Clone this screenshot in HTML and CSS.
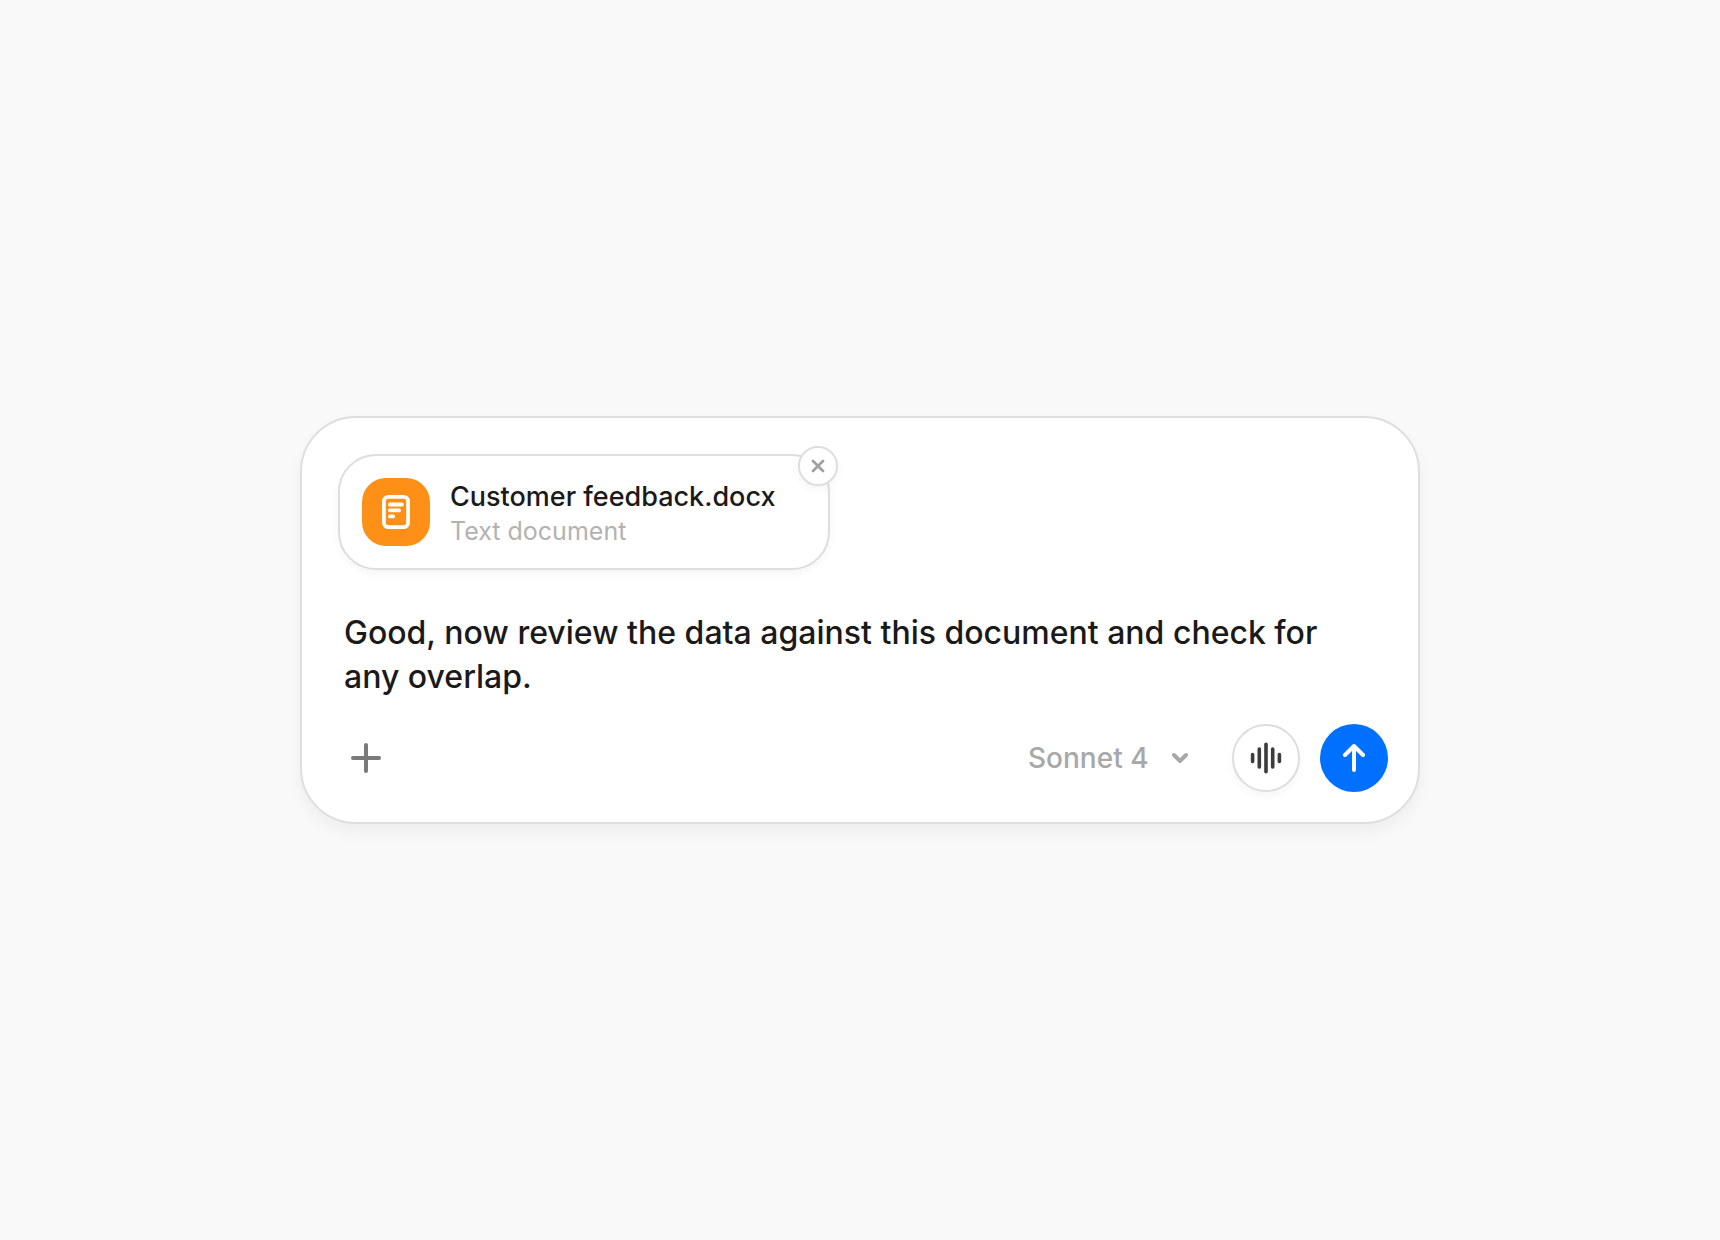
FILE: index.html
```html
<!DOCTYPE html>
<html lang="en">
<head>
  <meta charset="utf-8">
  <meta name="viewport" content="width=device-width, initial-scale=1">
  <title>Prompt composer</title>
  <link rel="stylesheet" href="styles.css">
</head>
<body>
  <main class="page">
    <form class="composer">
      <div class="attachment">
        <span class="attachment-icon">
          <svg width="28" height="34" viewBox="0 0 28 34" fill="none" stroke="#fff" aria-hidden="true">
            <rect x="1.9" y="1.9" width="24.2" height="30.2" rx="4.5" stroke-width="3.8"/>
            <path d="M7.9 9.5h12M7.9 15.4h9.2M7.9 21.4h3.2" stroke-width="3.8" stroke-linecap="round"/>
          </svg>
        </span>
        <div class="attachment-text">
          <span class="attachment-name">Customer feedback.docx</span>
          <span class="attachment-type">Text document</span>
        </div>
        <button class="remove" type="button" aria-label="Remove attachment">
          <svg width="14" height="14" viewBox="0 0 14 14" fill="none" stroke="#a0a0a0" stroke-width="2.8" stroke-linecap="round" aria-hidden="true">
            <path d="M2 2l10 10M12 2L2 12"/>
          </svg>
        </button>
      </div>

      <textarea class="prompt" rows="2" aria-label="Message" spellcheck="false">Good, now review the data against this document and check for any overlap.</textarea>

      <div class="toolbar">
        <button class="add" type="button" aria-label="Add">
          <svg width="30" height="30" viewBox="0 0 30 30" fill="none" stroke="#7a7a7a" stroke-width="4" stroke-linecap="round" aria-hidden="true">
            <path d="M15 2v26M2 15h26"/>
          </svg>
        </button>
        <div class="model">
          <select class="model-select" aria-label="Model">
            <option>Sonnet 4</option>
          </select>
          <svg class="model-chevron" width="16" height="12" viewBox="0 0 16 12" fill="none" stroke="#a8a8a8" stroke-width="4" stroke-linecap="round" stroke-linejoin="round" aria-hidden="true">
            <path d="M2 3l6 6 6-6"/>
          </svg>
        </div>
        <button class="round voice" type="button" aria-label="Voice input">
          <svg width="32" height="32" viewBox="0 0 32 32" fill="none" stroke="#3c3c3c" stroke-width="3.6" stroke-linecap="round" aria-hidden="true">
            <path d="M2.6 12.6v6.8M9.3 7v18M16 2.3v27.4M22.7 7v18M29.4 12.6v6.8"/>
          </svg>
        </button>
        <button class="round send" type="submit" aria-label="Send">
          <svg width="24" height="30" viewBox="0 0 24 30" fill="none" stroke="#fff" stroke-width="4" stroke-linecap="round" stroke-linejoin="round" aria-hidden="true">
            <path d="M12 27V3M3 12l9-9 9 9"/>
          </svg>
        </button>
      </div>
    </form>
  </main>
</body>
</html>
```
FILE: styles.css
```css
*,
*::before,
*::after {
  box-sizing: border-box;
}

body {
  margin: 0;
  background: #f9f9f9;
  color: #1a1a1a;
  font-family: Inter, "Liberation Sans", sans-serif;
  font-weight: 500;
}

button,
select,
textarea {
  margin: 0;
  padding: 0;
  border: 0;
  background: none;
  color: inherit;
  font: inherit;
}

button,
select {
  cursor: pointer;
}

svg {
  display: block;
}

.page {
  display: flex;
  align-items: center;
  justify-content: center;
  min-height: 100vh;
  padding: 24px;
}

.composer {
  display: flex;
  flex-direction: column;
  align-items: flex-start;
  width: 100%;
  max-width: 1120px;
  padding: 36px 30px 30px 36px;
  border: 2px solid #dedede;
  border-radius: 56px;
  background: #fff;
  box-shadow: 0 8px 16px rgba(0, 0, 0, 0.05);
}

.attachment {
  position: relative;
  display: flex;
  align-items: center;
  gap: 20px;
  padding: 22px 53px 22px 22px;
  border: 2px solid #dedede;
  border-radius: 38px;
  background: #fff;
  box-shadow: 0 4px 8px rgba(0, 0, 0, 0.04);
}

.attachment-icon {
  display: grid;
  place-items: center;
  width: 68px;
  height: 68px;
  border-radius: 24px;
  background: #ff9017;
}

.attachment-text {
  display: flex;
  flex-direction: column;
}

.attachment-name {
  font-size: 27px;
  line-height: 38px;
}

.attachment-type {
  color: #b2b2b2;
  font-size: 25px;
  font-weight: 400;
  line-height: 30px;
}

.remove {
  position: absolute;
  top: -10px;
  right: -10px;
  display: grid;
  place-items: center;
  width: 40px;
  height: 40px;
  border: 2px solid #dedede;
  border-radius: 50%;
  background: #fff;
  box-shadow: 0 4px 8px rgba(0, 0, 0, 0.04);
}

.prompt {
  width: 100%;
  margin-top: 41px;
  padding: 0 24px 0 6px;
  outline: 0;
  resize: none;
  overflow: hidden;
  font-size: 32px;
  line-height: 44px;
}

.toolbar {
  display: flex;
  align-items: center;
  gap: 20px;
  width: 100%;
  margin-top: 25px;
}

.add {
  display: grid;
  place-items: center;
  width: 56px;
  height: 56px;
}

.model {
  display: grid;
  align-items: center;
  margin-left: auto;
  margin-right: 24px;
  color: #a8a8a8;
}

.model-select {
  grid-area: 1 / 1;
  padding-right: 39px;
  appearance: none;
  font-size: 28px;
  line-height: 36px;
}

.model-chevron {
  grid-area: 1 / 1;
  justify-self: end;
  pointer-events: none;
}

.round {
  display: grid;
  place-items: center;
  width: 68px;
  height: 68px;
  border-radius: 50%;
}

.voice {
  border: 2px solid #dedede;
  background: #fff;
  box-shadow: 0 4px 8px rgba(0, 0, 0, 0.04);
}

.send {
  background: #0070ff;
}
```
